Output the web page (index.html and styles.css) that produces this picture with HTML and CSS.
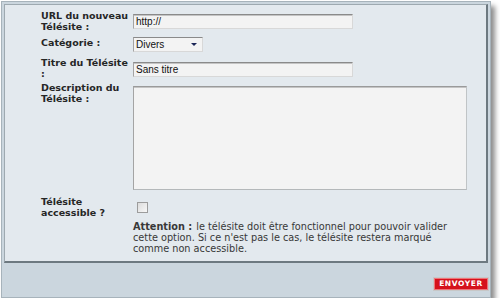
FILE: index.html
```html
<!DOCTYPE html>
<html lang="fr">
<head>
  <meta charset="UTF-8">
  <title>Ajouter un Télésite</title>
  <link rel="stylesheet" href="styles.css">
</head>
<body>
  <div class="frame">
    <form class="panel">
      <!-- URL -->
      <div class="row">
        <label class="lbl" for="url">URL du nouveau Télésite :</label>
        <input class="field field-url" type="text" id="url" value="http://">
      </div>

      <!-- Catégorie -->
      <div class="row row-cat">
        <label class="lbl">Catégorie :</label>
        <div class="select">
          <span>Divers</span>
          <span class="arrow"></span>
        </div>
      </div>

      <!-- Titre -->
      <div class="row row-title">
        <label class="lbl" for="titre">Titre du Télésite :</label>
        <input class="field field-title" type="text" id="titre" value="Sans titre">
      </div>

      <!-- Description -->
      <div class="row row-desc">
        <label class="lbl" for="desc">Description du Télésite :</label>
        <textarea class="area" id="desc"></textarea>
      </div>

      <!-- Accessible -->
      <div class="row row-acc">
        <label class="lbl" for="acc">Télésite accessible ?</label>
        <input class="check" type="checkbox" id="acc">
      </div>

      <p class="note"><b>Attention :</b> le télésite doit être fonctionnel pour pouvoir valider cette option. Si ce n'est pas le cas, le télésite restera marqué comme non accessible.</p>
    </form>

    <div class="footer">
      <button class="send" type="button">ENVOYER</button>
    </div>
  </div>
</body>
</html>
```

FILE: styles.css
```css
body {
  margin: 0;
  font-family: "DejaVu Sans", Verdana, sans-serif;
  color: #262626;
  background-color: #ffffff;
}
.frame {
  width: 484px;
  margin: 1px 0 0 1px;
  padding: 2px;
  border: 1px solid #a7b3bb;
  background-color: #cbd6de;
  box-shadow: 4px 5px 5px rgba(0, 0, 0, 0.45);
}
.panel {
  margin: 0;
  background-color: #e3e9ee;
  border-style: solid;
  border-width: 1px 2px 2px 1px;
  border-color: #9ea9b0 #6d7980 #6d7980 #9ea9b0;
  padding: 5px 0 7px 36px;
}
.row {
  display: flex;
  align-items: flex-start;
}
.lbl {
  width: 88px;
  margin-right: 4px;
  font-size: 9.5px;
  font-weight: bold;
  line-height: 11px;
  color: #262626;
}

/* champs */
.field, .area {
  box-sizing: border-box;
  margin: 0;
  padding: 0 2px;
  background-color: #f3f3f3;
  border: 1px solid;
  border-color: #8a8a8a #d8d8d8 #d8d8d8 #a4a4a4;
  box-shadow: inset 0 1px 0 #c4c4c4;
  font-family: "Liberation Sans", Arial, sans-serif;
  font-size: 10px;
  color: #111111;
  outline: none;
}
.field {
  width: 220px;
  height: 15px;
}
.field-url {
  margin-top: 4px;
}
.field-title {
  margin-top: 5px;
}
.row-cat {
  margin-top: 5px;
}
.row-title {
  margin-top: 5px;
}
.row-desc {
  margin-top: 3px;
}
.row-acc {
  margin-top: 6px;
}
.area {
  width: 334px;
  height: 104px;
  margin-top: 4px;
  resize: none;
  border-color: #9a9a9a #c0c4c6 #b4b8ba #a4a4a4;
}

/* liste déroulante */
.select {
  box-sizing: border-box;
  display: flex;
  align-items: center;
  justify-content: space-between;
  width: 70px;
  height: 15px;
  padding: 0 5px 0 2px;
  background-color: #f3f3f3;
  border: 1px solid;
  border-color: #8a8a8a #d8d8d8 #d8d8d8 #a4a4a4;
  font-family: "Liberation Sans", Arial, sans-serif;
  font-size: 10px;
  color: #111111;
}
.arrow {
  width: 0;
  height: 0;
  border-left: 3px solid transparent;
  border-right: 3px solid transparent;
  border-top: 3px solid #1a2556;
}

.check {
  appearance: none;
  -webkit-appearance: none;
  box-sizing: border-box;
  width: 11px;
  height: 11px;
  margin: 6px 0 0 4px;
  border: 1px solid #9c9c9c;
  background: linear-gradient(135deg, #dcdcdc, #f7f7f7);
}

.note {
  width: 322px;
  margin: 3px 0 0 92px;
  font-size: 10.8px;
  font-stretch: condensed;
  line-height: 11px;
  color: #383838;
}
.note b {
  margin-right: 1px;
}

/* bas du cadre */
.footer {
  display: flex;
  justify-content: flex-end;
  padding: 15px 0 5px;
}
.send {
  box-sizing: border-box;
  width: 54px;
  height: 12px;
  padding: 0;
  background-color: #d5121c;
  border: 1px solid #ee7479;
  box-shadow: 0 0 0 1px #c7c7c7;
  color: #ffffff;
  font-family: "DejaVu Sans", Verdana, sans-serif;
  font-size: 7.5px;
  font-weight: bold;
  letter-spacing: 0.6px;
  line-height: 10px;
}
```
